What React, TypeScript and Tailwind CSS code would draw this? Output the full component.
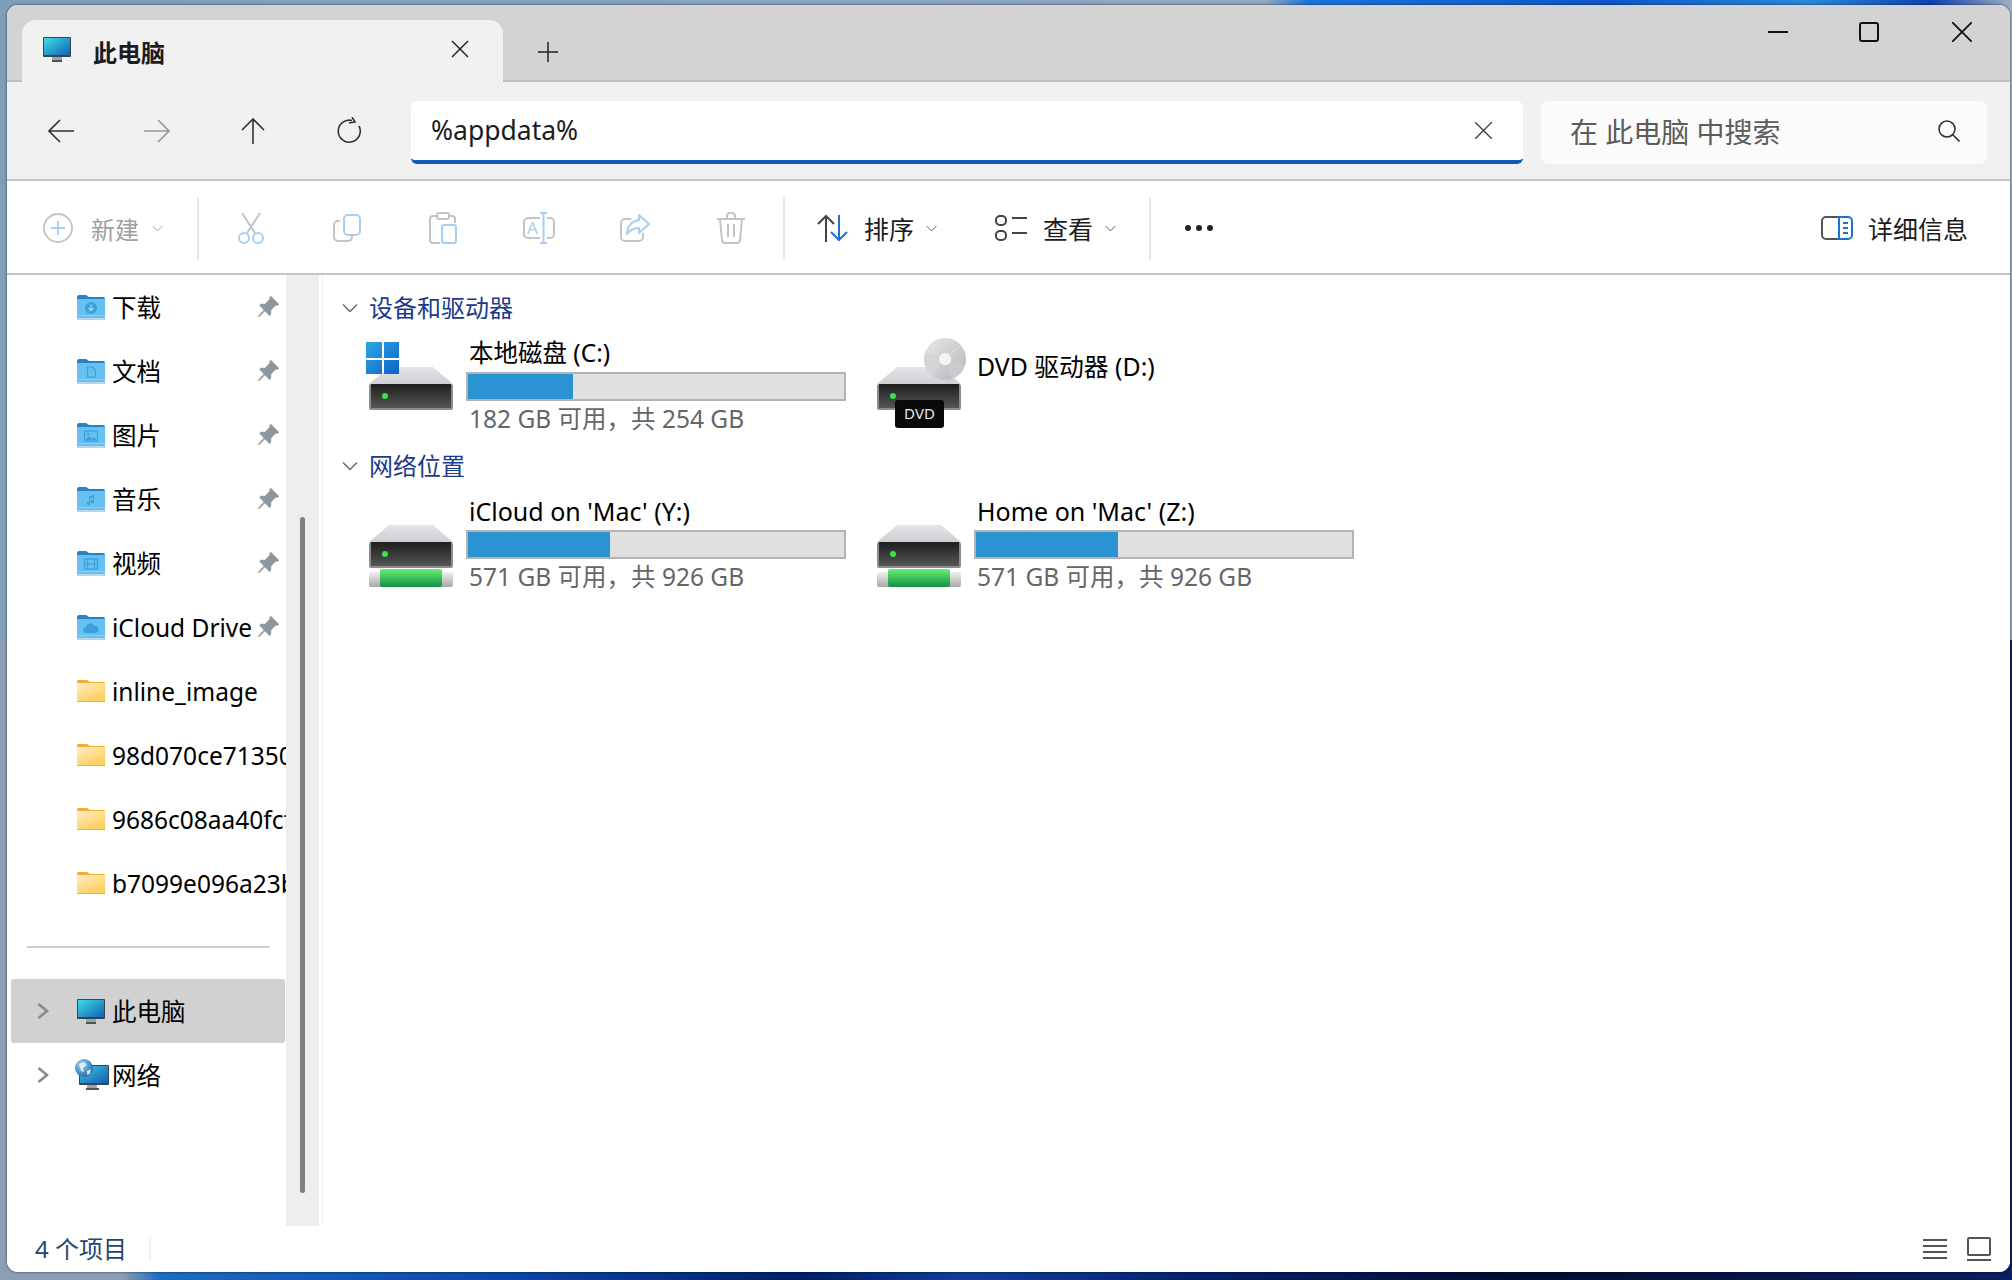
import React from 'react';
import { BsPinAngleFill } from 'react-icons/bs';

const GREY = '#c4c4c4';
const BLUE = '#a6cff2';

const Chevron = ({ dir = 'down', color = '#666', className = '' }: { dir?: 'down' | 'right'; color?: string; className?: string }) =>
    dir === 'down' ? (
        <svg viewBox="0 0 16 16" className={className} fill="none" stroke={color} strokeWidth={1.4}>
            <path d="M1 4.5 8 11.5 15 4.5" />
        </svg>
    ) : (
        <svg viewBox="0 0 12 16" className={className} fill="none" stroke={color} strokeWidth={2.6}>
            <path d="M1.5 1 10 8 1.5 15" />
        </svg>
    );

const Monitor = ({ id }: { id: string }) => (
    <svg viewBox="0 0 28 25" className="w-[28px] h-[25px] shrink-0">
        <defs>
            <linearGradient id={id} x1="0" y1="0" x2="1" y2="1">
                <stop offset="0" stopColor="#40dde6" />
                <stop offset="1" stopColor="#1160b5" />
            </linearGradient>
        </defs>
        <rect x="9" y="19" width="10" height="4" fill="#9aa3aa" />
        <rect x="9" y="23" width="10" height="2" fill="#4a5560" />
        <rect x="0" y="0" width="28" height="20" rx="1" fill="#37454f" />
        <rect x="1" y="1" width="26" height="17" fill={`url(#${id})`} />
    </svg>
);

const NetworkIcon = () => (
    <svg viewBox="0 0 34 32" className="w-[34px] h-[32px] shrink-0 -ml-[2px] -mr-[4px]">
        <defs>
            <linearGradient id="netScreen" x1="0" y1="0" x2="1" y2="1">
                <stop offset="0" stopColor="#40c5e0" />
                <stop offset="1" stopColor="#1160b5" />
            </linearGradient>
            <radialGradient id="netGlobe" cx="0.35" cy="0.3" r="0.8">
                <stop offset="0" stopColor="#9fd4f0" />
                <stop offset="1" stopColor="#1a5fa8" />
            </radialGradient>
        </defs>
        <rect x="12" y="25" width="10" height="4" fill="#9aa3aa" />
        <rect x="11" y="29" width="13" height="2" fill="#4a5560" />
        <rect x="4" y="6" width="30" height="20" rx="1" fill="#37454f" />
        <rect x="5" y="7" width="28" height="17" fill="url(#netScreen)" />
        <circle cx="9" cy="9" r="9" fill="url(#netGlobe)" />
        <path d="M4 5 9 3 12 6 8 9 9 13 6 12Z M12 12 16 10 15 15 12 16Z" fill="#e6f3fa" opacity="0.85" />
    </svg>
);

const Folder = ({ glyph }: { glyph: string }) => {
    const g = '#3f9fdd';
    return (
        <svg viewBox="0 0 28 25" className="w-[28px] h-[25px] shrink-0">
            <path d="M0 2a2 2 0 0 1 2-2h7l3 2h14a2 2 0 0 1 2 2v6H0Z" fill="#1f86c8" />
            <rect x="0" y="4" width="28" height="20" rx="1" fill="#66c1f1" />
            <rect x="0" y="20" width="28" height="1" fill="#86d0f5" />
            <rect x="0" y="23" width="28" height="2" fill="#b9d4e2" />
            {glyph === 'download' && (
                <>
                    <circle cx="14" cy="13" r="6" fill={g} />
                    <path d="M14 9.5v6M11.5 13l2.5 2.5 2.5-2.5" stroke="#9fdcf8" strokeWidth="1.2" fill="none" />
                </>
            )}
            {glyph === 'doc' && <path d="M10.5 8h5l3 3v7h-8Z" fill="none" stroke={g} strokeWidth="1.2" />}
            {glyph === 'image' && (
                <>
                    <rect x="7.5" y="8" width="13" height="10" fill="none" stroke={g} strokeWidth="1.2" />
                    <path d="M8 17l4-4 3 3 2-2 3 3Z" fill={g} />
                    <circle cx="11" cy="11" r="1.2" fill={g} />
                </>
            )}
            {glyph === 'music' && <path d="M12 9.5 17 8v7a1.8 1.5 0 1 1-1.2-1.4V10.5l-2.6.8v5.2a1.8 1.5 0 1 1-1.2-1.4Z" fill={g} />}
            {glyph === 'video' && (
                <>
                    <rect x="7.5" y="8" width="13" height="10" fill="none" stroke={g} strokeWidth="1.3" />
                    <path d="M10.5 8v10M17.5 8v10M7.5 13h13" stroke={g} strokeWidth="1.2" />
                </>
            )}
            {glyph === 'cloud' && <path d="M9.5 18a3 3 0 0 1-.4-6 4.5 4.5 0 0 1 8.5-1 3.5 3.5 0 0 1 1 7Z" fill={g} />}
        </svg>
    );
};

const YellowFolder = () => (
    <svg viewBox="0 0 28 22" className="w-[28px] h-[22px] shrink-0">
        <defs>
            <linearGradient id="yellow" x1="0" y1="0" x2="0.6" y2="1">
                <stop offset="0" stopColor="#fff0c4" />
                <stop offset="1" stopColor="#ffcd5c" />
            </linearGradient>
        </defs>
        <path d="M0 1a1 1 0 0 1 1-1h9l3 2h14a1 1 0 0 1 1 1v5H0Z" fill="#f7ae2e" />
        <rect x="0" y="3" width="28" height="19" fill="url(#yellow)" />
        <rect x="0" y="21" width="28" height="1" fill="#ecaa3c" />
    </svg>
);

const DriveBody = ({ suffix }: { suffix: string }) => (
    <>
        <defs>
            <linearGradient id={`top${suffix}`} x1="0" y1="0" x2="0" y2="1">
                <stop offset="0" stopColor="#e3e4e7" />
                <stop offset="1" stopColor="#cfd0d4" />
            </linearGradient>
            <linearGradient id={`body${suffix}`} x1="0" y1="0" x2="0" y2="1">
                <stop offset="0" stopColor="#1e1e1e" />
                <stop offset="1" stopColor="#555" />
            </linearGradient>
        </defs>
        <path d="M23 29H67L87 46H3Z" fill={`url(#top${suffix})`} />
        <rect x="3" y="46" width="84" height="26" rx="2" fill="#8c8c8c" />
        <rect x="5" y="46" width="80" height="24" fill={`url(#body${suffix})`} />
        <circle cx="19" cy="58" r="3" fill="#38e04a" />
    </>
);

const WindowsDrive = () => (
    <svg viewBox="0 0 100 100" className="w-[100px] h-[100px] shrink-0">
        <DriveBody suffix="c" />
        <defs>
            <linearGradient id="winLogo" x1="0" y1="0" x2="1" y2="1">
                <stop offset="0" stopColor="#2fa7e8" />
                <stop offset="1" stopColor="#0d62c4" />
            </linearGradient>
        </defs>
        <path d="M0 4H16V20H0Z M18 4H33V20H18Z M0 22H16V36H0Z M18 22H33V36H18Z" fill="url(#winLogo)" />
    </svg>
);

const DvdDrive = () => (
    <svg viewBox="0 0 100 100" className="w-[100px] h-[100px] shrink-0">
        <DriveBody suffix="d" />
        <defs>
            <linearGradient id="disc" x1="0" y1="0" x2="1" y2="1">
                <stop offset="0" stopColor="#e8e8e8" />
                <stop offset="1" stopColor="#b4b6b8" />
            </linearGradient>
        </defs>
        <circle cx="71" cy="21" r="21" fill="url(#disc)" />
        <path d="M71 21 91 27A21 21 0 0 1 78 41Z" fill="#c9cbcc" />
        <path d="M71 21 58 38A21 21 0 0 1 51 15Z" fill="#d4d6d6" />
        <path d="M51 15 69 21" stroke="#e6c4e6" strokeWidth="1" />
        <path d="M73 19 86 8" stroke="#d2ead2" strokeWidth="1" />
        <circle cx="71" cy="21" r="6.5" fill="#f4f4f4" stroke="#d0d0d0" />
        <rect x="21" y="62" width="49" height="28" rx="3" fill="#0a0a0a" />
        <text x="45.5" y="81" textAnchor="middle" fontSize="15" fill="#e8e8e8">DVD</text>
    </svg>
);

const NetworkDrive = ({ suffix }: { suffix: string }) => (
    <svg viewBox="0 0 100 100" className="w-[100px] h-[100px] shrink-0">
        <DriveBody suffix={suffix} />
        <defs>
            <linearGradient id={`pipe${suffix}`} x1="0" y1="0" x2="0" y2="1">
                <stop offset="0" stopColor="#f0f0f0" />
                <stop offset="1" stopColor="#a8a8a8" />
            </linearGradient>
            <linearGradient id={`green${suffix}`} x1="0" y1="0" x2="0" y2="1">
                <stop offset="0" stopColor="#68ee72" />
                <stop offset="1" stopColor="#149048" />
            </linearGradient>
        </defs>
        <rect x="3" y="76" width="84" height="15" rx="2" fill={`url(#pipe${suffix})`} />
        <rect x="14" y="73" width="62" height="18" rx="2" fill={`url(#green${suffix})`} />
    </svg>
);

const CutIcon = () => (
    <svg viewBox="0 0 28 32" className="w-[28px] h-[32px]" fill="none" strokeWidth="2">
        <path d="M5 1 18 21M23 1 10 21" stroke={GREY} />
        <circle cx="7" cy="26" r="5" stroke={BLUE} />
        <circle cx="21" cy="26" r="5" stroke={BLUE} />
    </svg>
);

const CopyIcon = () => (
    <svg viewBox="0 0 28 28" className="w-[28px] h-[28px]" fill="none" strokeWidth="2">
        <path d="M7 7H5a4 4 0 0 0-4 4v12a4 4 0 0 0 4 4h10a4 4 0 0 0 4-4v-1" stroke={GREY} />
        <rect x="11" y="1" width="16" height="20" rx="4" stroke={BLUE} />
    </svg>
);

const PasteIcon = () => (
    <svg viewBox="0 0 28 32" className="w-[28px] h-[32px]" fill="none" strokeWidth="2">
        <path d="M8 4H4a3 3 0 0 0-3 3v21a3 3 0 0 0 3 3h7M20 4h3a3 3 0 0 1 3 3v4" stroke={GREY} />
        <rect x="8" y="1" width="12" height="6" rx="2" stroke={GREY} />
        <rect x="13" y="13" width="14" height="18" rx="2" stroke={BLUE} />
    </svg>
);

const RenameIcon = () => (
    <svg viewBox="0 0 32 32" className="w-[32px] h-[32px]" fill="none" strokeWidth="2">
        <path d="M17 6H5a4 4 0 0 0-4 4v12a4 4 0 0 0 4 4h12M24 6h3a4 4 0 0 1 4 4v12a4 4 0 0 1-4 4h-3" stroke={GREY} />
        <path d="M20.5 2v28M17 1h7M17 31h7" stroke={BLUE} />
        <text x="4" y="22" fontSize="17" fill={BLUE} stroke="none">A</text>
    </svg>
);

const ShareIcon = () => (
    <svg viewBox="0 0 30 28" className="w-[30px] h-[28px]" fill="none" strokeWidth="2">
        <path d="M11 5H5a4 4 0 0 0-4 4v14a4 4 0 0 0 4 4h14a4 4 0 0 0 4-4v-4" stroke={GREY} />
        <path d="M19 1l10 9-10 9v-5c-6 0-9 2-12 6 0-8 5-13 12-14Z" stroke={BLUE} strokeLinejoin="round" />
    </svg>
);

const TrashIcon = () => (
    <svg viewBox="0 0 30 32" className="w-[30px] h-[32px]" fill="none" stroke={GREY} strokeWidth="2">
        <path d="M1 7H29M11 7V4a3 3 0 0 1 3-3h2a3 3 0 0 1 3 3v3M4 7l2 21a3 3 0 0 0 3 3h12a3 3 0 0 0 3-3l2-21M12 12V25M18 12V25" />
    </svg>
);

const NavButton = ({ children }: { children: React.ReactNode }) => (
    <div className="w-[96px] flex items-center justify-center shrink-0">{children}</div>
);

const ToolButton = ({ children }: { children: React.ReactNode }) => (
    <div className="w-[96px] flex items-center justify-center shrink-0">{children}</div>
);

const Divider = ({ className = '' }: { className?: string }) => (
    <div className={`w-[2px] h-[63px] bg-[#e8e8e8] shrink-0 ${className}`} />
);

const pinned = [
    { name: '下载', glyph: 'download' },
    { name: '文档', glyph: 'doc' },
    { name: '图片', glyph: 'image' },
    { name: '音乐', glyph: 'music' },
    { name: '视频', glyph: 'video' },
    { name: 'iCloud Drive', glyph: 'cloud' },
];

const folders = ['inline_image', '98d070ce71350c8e2a', '9686c08aa40fcf1b3d', 'b7099e096a23bd70e1'];

const Bar = ({ fill }: { fill: string }) => (
    <div className="w-[380px] h-[29px] border-2 border-[#b3b3b3] bg-[#e0e0e0]">
        <div className={`h-full bg-[#2b93d2] ${fill}`} />
    </div>
);

const DriveText = ({ name, sub, fill, nameSize }: { name: string; sub: string; fill: string; nameSize: string }) => (
    <div className="flex flex-col">
        <div className={`h-[34px] pl-[3px] pb-[3px] flex items-center text-black whitespace-nowrap ${nameSize}`}>{name}</div>
        <Bar fill={fill} />
        <div className="h-[36px] pl-[3px] flex items-center text-[24.5px] text-[#666] whitespace-nowrap">{sub}</div>
    </div>
);

const SectionHeader = ({ title, className = '' }: { title: string; className?: string }) => (
    <div className={`h-[40px] pl-[19px] flex items-center ${className}`}>
        <Chevron className="w-[16px] h-[16px]" color="#666" />
        <span className="ml-[11px] text-[24px] text-[#1b3a8c]">{title}</span>
    </div>
);

export default function App() {
    return (
        <div className="w-[2012px] h-[1280px] pt-[5px] pl-[7px] pr-[2px] pb-[8px] overflow-hidden font-['Noto_Sans','Noto_Sans_CJK_SC',sans-serif] [background:linear-gradient(90deg,#7f9fb8_0%,#8fa8bf_63%,#1c74d6_65%,#0f55c8_80%,#2a8ad8_90%,#103fb0_96%,#9fb0bf_100%)_top/100%_50%_no-repeat,linear-gradient(90deg,#8b9fb4_0%,#8b9fb4_6%,#1c6cc0_8%,#0d47a8_25%,#001f66_40%,#123e9a_48%,#05206a_60%,#020c30_75%,#0a1f60_100%)_bottom/100%_50%_no-repeat]">
            <div className="h-full flex flex-col rounded-[11px] overflow-hidden bg-white shadow-[0_0_3px_rgba(0,0,0,0.6)]">
                {/* tabs */}
                <div className="h-[77px] shrink-0 bg-[#d3d3d3] border-b-2 border-[#c0c0c0] flex items-end relative">
                    <div className="ml-[15px] -mb-[2px] w-[481px] h-[62px] bg-[#f1f1f1] rounded-t-[14px] flex items-center pl-[21px]">
                        <div className="-mt-[4px]"><Monitor id="tabMonitor" /></div>
                        <span className="ml-[22px] pt-[3px] text-[24px] font-bold text-[#1c1c1c]">此电脑</span>
                        <svg viewBox="0 0 18 18" className="w-[18px] h-[18px] ml-[286px] -mt-[4px]" stroke="#222" strokeWidth="1.5"><path d="M1 1 17 17M17 1 1 17" /></svg>
                    </div>
                    <svg viewBox="0 0 20 20" className="w-[20px] h-[20px] ml-[35px] mb-[18px]" stroke="#222" strokeWidth="1.5"><path d="M10 0V20M0 10H20" /></svg>
                    <div className="ml-auto flex items-center h-[20px] self-start mt-[17px] pr-[38px]">
                        <div className="w-[20px] h-[2px] bg-[#111]" />
                        <div className="w-[20px] h-[20px] ml-[71px] border-2 border-[#111] rounded-[3px]" />
                        <svg viewBox="0 0 20 20" className="w-[20px] h-[20px] ml-[73px]" stroke="#111" strokeWidth="1.8"><path d="M0 0 20 20M20 0 0 20" /></svg>
                    </div>
                </div>

                {/* navigation */}
                <div className="h-[99px] shrink-0 bg-[#f1f1f1] border-b-2 border-[#c4c4c4] flex items-center pl-[6px]">
                    <NavButton>
                        <svg viewBox="0 0 26 24" className="w-[26px] h-[24px]" fill="none" stroke="#333" strokeWidth="1.6"><path d="M26 12H1M12 1 1 12 12 23" /></svg>
                    </NavButton>
                    <NavButton>
                        <svg viewBox="0 0 26 24" className="w-[26px] h-[24px]" fill="none" stroke="#999" strokeWidth="1.6"><path d="M0 12H25M14 1 25 12 14 23" /></svg>
                    </NavButton>
                    <NavButton>
                        <svg viewBox="0 0 24 26" className="w-[24px] h-[26px] -ml-[1px]" fill="none" stroke="#333" strokeWidth="1.6"><path d="M12 26V1M1 12 12 1 23 12" /></svg>
                    </NavButton>
                    <NavButton>
                        <svg viewBox="0 0 26 26" className="w-[26px] h-[26px] -mt-[2px]" fill="none" stroke="#333" strokeWidth="1.6"><path d="M16 3.5A11 11 0 1 0 23 9M16 0l3 5-6 1" /></svg>
                    </NavButton>
                    <div className="ml-[14px] mt-[3px] w-[1112px] h-[63px] bg-white rounded-[6px] border-b-4 border-[#0f5cb8] flex items-center pl-[20px] pr-[31px]">
                        <span className="pt-[2px] text-[26.5px] text-[#1c1c1c]">%appdata%</span>
                        <svg viewBox="0 0 17 17" className="w-[17px] h-[17px] ml-auto" stroke="#444" strokeWidth="1.4"><path d="M0 0 17 17M17 0 0 17" /></svg>
                    </div>
                    <div className="ml-[18px] mt-[3px] w-[446px] h-[63px] bg-[#fbfbfb] rounded-[8px] flex items-center pl-[29px] pr-[27px]">
                        <span className="text-[28px] text-[#5c5c5c] whitespace-pre">在 此电脑 中搜索</span>
                        <svg viewBox="0 0 22 22" className="w-[22px] h-[22px] ml-auto -mt-[2px]" fill="none" stroke="#333" strokeWidth="1.6"><circle cx="9" cy="9" r="8" /><path d="M14.5 14.5 21.5 21.5" /></svg>
                    </div>
                </div>

                {/* toolbar */}
                <div className="h-[94px] shrink-0 pt-[2px] bg-white border-b-2 border-[#c4c4c4] flex items-center">
                    <div className="w-[190px] shrink-0 pl-[36px] flex items-center">
                        <svg viewBox="0 0 30 30" className="w-[30px] h-[30px]" fill="none" strokeWidth="1.8">
                            <circle cx="15" cy="15" r="14" stroke={GREY} />
                            <path d="M15 8V22M8 15H22" stroke={BLUE} />
                        </svg>
                        <span className="ml-[18px] pt-[3px] text-[24px] text-[#a0a0a0]">新建</span>
                        <Chevron className="w-[11px] h-[11px] ml-[13px]" color="#a0a0a0" />
                    </div>
                    <Divider />
                    <div className="ml-[4px] flex items-center">
                        <ToolButton><CutIcon /></ToolButton>
                        <ToolButton><CopyIcon /></ToolButton>
                        <ToolButton><PasteIcon /></ToolButton>
                        <ToolButton><RenameIcon /></ToolButton>
                        <ToolButton><ShareIcon /></ToolButton>
                        <ToolButton><TrashIcon /></ToolButton>
                    </div>
                    <Divider className="ml-[4px]" />
                    <svg viewBox="0 0 32 28" className="w-[32px] h-[28px] ml-[32px]" fill="none" strokeWidth="2">
                        <path d="M9 28V2M1 10 9 2 17 10" stroke="#444" />
                        <path d="M22 1V26M14 18 22 26 30 18" stroke="#1a73d0" />
                    </svg>
                    <span className="ml-[15px] pt-[4px] text-[25px] text-[#1c1c1c]">排序</span>
                    <Chevron className="w-[11px] h-[11px] ml-[12px]" color="#555" />
                    <svg viewBox="0 0 32 26" className="w-[32px] h-[26px] ml-[58px]" fill="none" stroke="#444" strokeWidth="2">
                        <rect x="1" y="1" width="10" height="9" rx="4" />
                        <rect x="1" y="16" width="10" height="9" rx="4" />
                        <path d="M17 3H32M17 18H32" />
                    </svg>
                    <span className="ml-[16px] pt-[4px] text-[25px] text-[#1c1c1c]">查看</span>
                    <Chevron className="w-[11px] h-[11px] ml-[12px]" color="#555" />
                    <Divider className="ml-[33px]" />
                    <div className="ml-[34px] flex gap-[5px]">
                        <div className="w-[6px] h-[6px] rounded-full bg-[#222]" />
                        <div className="w-[6px] h-[6px] rounded-full bg-[#222]" />
                        <div className="w-[6px] h-[6px] rounded-full bg-[#222]" />
                    </div>
                    <div className="ml-auto pr-[42px] flex items-center">
                        <svg viewBox="0 0 32 24" className="w-[32px] h-[24px]" fill="none" strokeWidth="2">
                            <path d="M18 1H5a4 4 0 0 0-4 4v14a4 4 0 0 0 4 4h13" stroke="#555" />
                            <path d="M18 1h9a4 4 0 0 1 4 4v14a4 4 0 0 1-4 4h-9Z" stroke="#1a73d0" />
                            <path d="M22 7h5M22 12h5M22 17h5" stroke="#1a73d0" />
                        </svg>
                        <span className="ml-[15px] pt-[4px] text-[25px] text-[#1c1c1c]">详细信息</span>
                    </div>
                </div>

                {/* body */}
                <div className="flex-1 min-h-0 flex">
                    <div className="w-[279px] shrink-0 overflow-hidden text-[24.5px] text-black">
                        {pinned.map(item => (
                            <div key={item.name} className="h-[64px] pl-[70px] pr-[6px] flex items-center whitespace-nowrap">
                                <Folder glyph={item.glyph} />
                                <span className="ml-[7px] pt-[2px]">{item.name}</span>
                                <BsPinAngleFill className="ml-auto w-[24px] h-[24px] shrink-0 text-[#8c979e]" />
                            </div>
                        ))}
                        {folders.map(name => (
                            <div key={name} className="h-[64px] pl-[70px] flex items-center whitespace-nowrap">
                                <YellowFolder />
                                <span className="ml-[7px] pt-[2px]">{name}</span>
                            </div>
                        ))}
                        <div className="mt-[31px] mb-[31px] ml-[20px] w-[243px] h-[2px] bg-[#cfcfcf]" />
                        <div className="h-[64px] ml-[4px] mr-[1px] pl-[26px] rounded-[3px] bg-[#d1d1d1] flex items-center">
                            <Chevron dir="right" color="#8a8a8a" className="w-[12px] h-[16px] shrink-0" />
                            <div className="ml-[28px]"><Monitor id="sideMonitor" /></div>
                            <span className="ml-[7px] pt-[2px]">此电脑</span>
                        </div>
                        <div className="h-[64px] ml-[4px] pl-[26px] flex items-center">
                            <Chevron dir="right" color="#8a8a8a" className="w-[12px] h-[16px] shrink-0" />
                            <div className="ml-[28px] w-[28px] flex"><NetworkIcon /></div>
                            <span className="ml-[7px] pt-[2px]">网络</span>
                        </div>
                    </div>
                    <div className="w-[33px] shrink-0 bg-[#eeeeee] pt-[242px]">
                        <div className="ml-[14px] w-[5px] h-[676px] rounded-full bg-[#808080]" />
                    </div>
                    <div className="w-[3px] shrink-0 bg-white" />
                    <div className="flex-1 border-l border-[#f0f0f0] pt-[13px]">
                        <SectionHeader title="设备和驱动器" />
                        <div className="mt-[10px] pl-[43px] flex">
                            <div className="w-[508px] flex">
                                <WindowsDrive />
                                <DriveText name="本地磁盘 (C:)" nameSize="text-[24.5px]" sub="182 GB 可用，共 254 GB" fill="w-[27.8%]" />
                            </div>
                            <div className="flex">
                                <DvdDrive />
                                <div className="pl-[3px] h-[58px] flex items-center text-[24.8px] text-black whitespace-nowrap">DVD 驱动器 (D:)</div>
                            </div>
                        </div>
                        <SectionHeader title="网络位置" className="mt-[8px]" />
                        <div className="mt-[10px] pl-[43px] flex">
                            <div className="w-[508px] flex">
                                <NetworkDrive suffix="y" />
                                <DriveText name="iCloud on 'Mac' (Y:)" nameSize="text-[25px]" sub="571 GB 可用，共 926 GB" fill="w-[37.7%]" />
                            </div>
                            <div className="flex">
                                <NetworkDrive suffix="z" />
                                <DriveText name="Home on 'Mac' (Z:)" nameSize="text-[25px]" sub="571 GB 可用，共 926 GB" fill="w-[37.7%]" />
                            </div>
                        </div>
                    </div>
                </div>

                {/* status bar */}
                <div className="h-[46px] shrink-0 bg-white flex items-center pl-[28px] pr-[19px]">
                    <span className="text-[24px] text-[#24476f] w-[114px]">4 个项目</span>
                    <div className="w-[2px] h-[22px] bg-[#f0f0f0]" />
                    <svg viewBox="0 0 24 20" className="w-[24px] h-[20px] ml-auto" stroke="#555" strokeWidth="2"><path d="M0 1H24M0 7H24M0 13H24M0 19H24" /></svg>
                    <svg viewBox="0 0 24 24" className="w-[24px] h-[24px] ml-[20px]" fill="none" stroke="#555" strokeWidth="2"><rect x="1" y="1" width="22" height="17" rx="1" /><path d="M0 23H24" /></svg>
                </div>
            </div>
        </div>
    );
}
